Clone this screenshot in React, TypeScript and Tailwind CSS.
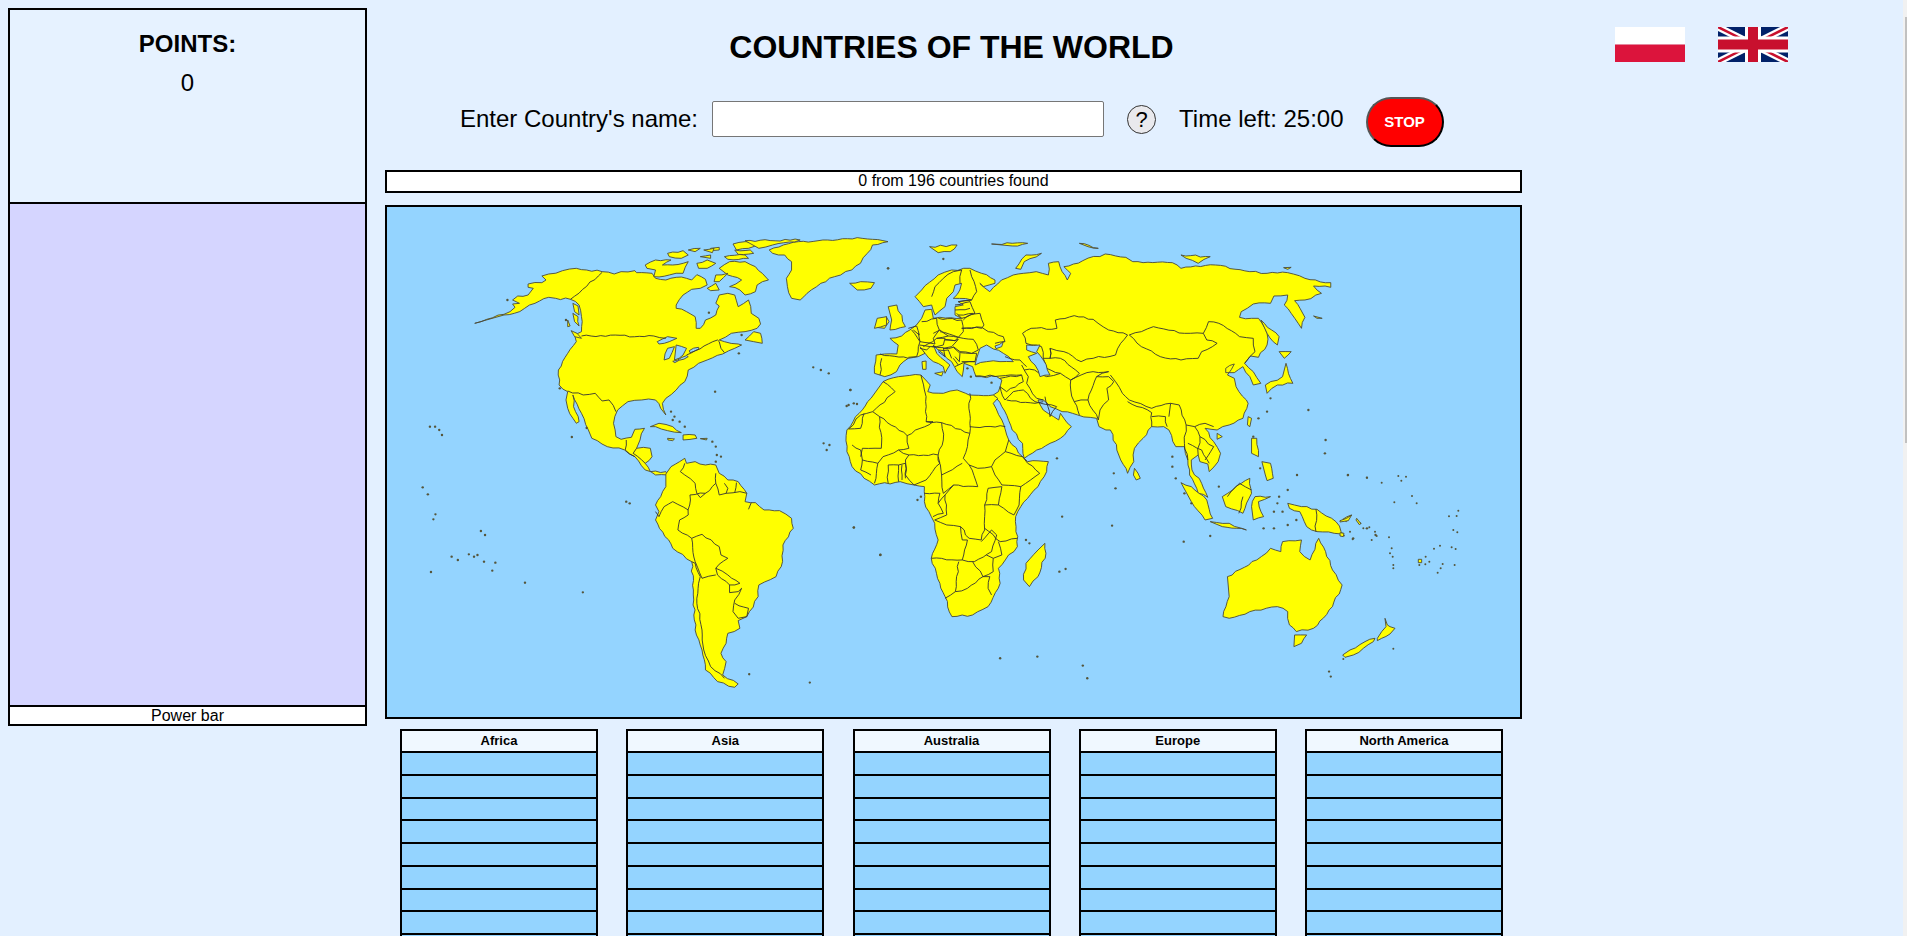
import React from 'react';

const FONT = "font-['Liberation_Sans',Arial,sans-serif]";
const CONTINENTS = ['Africa', 'Asia', 'Australia', 'Europe', 'North America'];
const ROWS = Array.from({ length: 12 }, (_, i) => i);

// reading coords: A = americas crop, B = old world crop, C = europe crop, D = pacific crop
const LAND_A = [
  '275,370 310,358 360,343 392,322 385,312 405,310 385,300 400,288 430,285 445,265 430,262 430,252 470,248 482,240 470,228 490,222 530,212 570,205 600,210 645,215 680,222 700,215 740,212 745,218 790,220 800,235 830,240 860,232 890,235 905,240 920,224 945,238 950,255 930,265 905,268 880,285 860,315 860,325 890,335 915,350 918,385 930,385 945,360 975,345 985,318 975,310 985,285 1010,280 1030,285 1040,320 1070,300 1078,340 1100,355 1105,372 1095,385 1060,395 1020,400 985,420 1000,425 1040,432 1050,435 1030,445 995,462 950,480 925,490 895,510 885,545 860,570 830,595 820,610 830,645 815,625 800,600 760,600 720,605 690,630 678,670 685,710 700,718 730,712 740,688 768,685 755,720 745,745 785,745 790,770 770,790 785,815 830,815 835,825 800,825 770,810 740,770 710,750 660,740 615,715 605,690 585,640 560,585 562,620 578,665 570,670 545,625 540,600 545,575 520,555 518,510 545,460 570,425 565,405 585,395 585,350 578,315 553,298 510,295 490,292 450,310 420,325 390,340 360,345',
  '830,822 845,800 870,785 885,775 890,790 915,785 945,795 975,795 985,820 1010,840 1040,845 1065,880 1060,905 1090,908 1115,930 1160,932 1195,955 1200,985 1170,1035 1165,1100 1150,1130 1100,1155 1098,1190 1065,1250 1040,1262 1045,1285 1010,1300 1005,1330 990,1360 1005,1385 995,1425 1040,1452 1030,1462 980,1445 945,1410 935,1350 915,1290 910,1170 905,1085 850,1045 800,960 810,935 800,915 815,890 830,860',
  '1130,150 1215,125 1300,120 1400,115 1475,125 1430,135 1415,160 1395,190 1370,210 1320,230 1280,250 1240,280 1220,300 1195,295 1183,260 1180,235 1195,210 1195,185 1175,165 1140,160',
  '770,195 800,180 845,180 820,195 850,195 895,185 880,220 840,225 795,230 800,210 775,205',
  '835,160 880,152 895,165 875,175 840,170',
  '895,150 930,145 915,155',
  '920,190 950,180 975,190 950,205 925,205',
  '960,145 985,142 985,150 960,152',
  '1025,132 1060,125 1100,130 1070,145 1035,150',
  '1060,122 1220,120 1140,135 1100,145',
  '985,205 1015,185 1060,185 1090,200 1110,220 1128,240 1095,255 1090,275 1060,285 1045,270 1015,260 1050,240 1010,225',
  '1000,170 1060,165 1070,175 1010,178',
  '1030,150 1075,150 1085,160 1040,163',
  '940,150 970,145 965,158',
  '930,170 960,165 960,175',
  '950,265 975,250 985,270 960,272',
  '975,225 1010,220 985,245 970,245',
  '1060,420 1085,395 1105,400 1110,430 1085,425',
  '785,680 810,670 850,680 875,698 835,692 800,680',
  '880,705 915,705 920,715 880,720',
  '835,715 855,717 850,722 836,720',
  '930,716 950,715 948,720',
  '1440,382 1470,350 1478,365 1465,385',
  '545,360 552,378 545,380',
  '560,310 575,318 578,345 565,335',
  '560,340 575,350 578,378 565,365',
  '555,392 572,400 585,415 565,410',
];

const BORDERS_A = [
  '645,217 553,298',
  '585,408 795,408 830,415',
  '890,465 980,420 985,425 990,445 1000,458',
  '545,573 590,585 625,580 645,603 665,600 685,635',
  '715,720 712,750 740,770',
  '745,745 735,760 770,790',
  '885,790 872,815 885,825 915,850 920,880 930,893 945,880 975,850 975,820',
  '975,850 985,885 1005,880 1010,865 1000,850',
  '1005,880 1045,875 1065,880',
  '1035,848 1030,878',
  '945,880 900,885 895,945 870,960 865,990 905,1015 935,1003 985,1040 990,1065 1010,1075 975,1105 980,1125 1015,1155 1045,1150 1010,1125 975,1105',
  '800,935 810,950 825,920 850,905 895,930',
  '905,1015 915,1085 935,1135 975,1125',
  '905,1085 915,1090 930,1130 925,1150 920,1210 935,1290 940,1350 960,1400 1000,1435',
  '1050,1165 1030,1200 1025,1235 1040,1255 1065,1250 1070,1225 1030,1210',
  '1015,1155 1015,1178 1040,1175 1050,1165',
  '1078,908 1070,928',
];

const LAND_B = [
  '100,430 105,375 130,372 165,372 169,345 145,325 179,318 203,300 222,285 237,265 247,240 266,238 271,265 290,262 353,265 334,255 334,230 358,225 343,215 382,210 329,205 348,180 353,160 334,165 329,185 310,205 305,230 276,255 266,225 242,230 218,200 237,180 285,135 324,120 377,115 411,130 450,150 450,160 416,170 406,160 435,185 469,150 503,135 532,130 570,125 605,135 605,100 635,95 645,125 660,150 670,130 650,110 705,92 770,72 830,82 850,95 880,98 965,98 990,115 1090,105 1190,125 1240,130 1300,128 1350,145 1425,158 1425,172 1375,168 1398,190 1350,210 1320,212 1350,262 1340,295 1310,250 1290,225 1300,195 1260,198 1250,220 1200,222 1165,245 1160,262 1195,265 1215,265 1240,310 1240,345 1215,382 1192,378 1175,400 1200,425 1222,460 1200,465 1190,440 1170,410 1145,428 1120,428 1120,415 1145,402 1125,435 1145,445 1150,470 1180,510 1185,520 1170,565 1130,585 1095,600 1060,595 1085,635 1105,670 1098,695 1072,725 1068,702 1045,695 1040,675 1020,690 1022,720 1050,760 1068,802 1040,790 1015,735 1010,690 1000,650 975,650 955,600 940,590 905,590 880,625 855,655 853,695 835,730 815,690 785,600 772,600 752,590 745,565 690,555 645,545 610,530 590,510 575,510 590,540 635,570 640,550 672,590 640,625 610,640 535,685 530,640 500,600 470,530 445,495 460,485 470,450 455,440 395,440 385,410 360,400 355,440 340,425 324,395 285,360 271,345 281,370 319,405 305,430 300,410 271,395 247,370 227,380 198,385 174,405 164,425 130,440',
  '125,455 170,440 235,435 262,465 255,485 300,490 340,480 365,490 375,495 445,495 458,505 445,520 470,570 490,630 530,680 545,695 605,695 600,725 575,770 525,830 510,860 515,950 480,990 460,1015 465,1060 430,1130 385,1155 325,1160 305,1100 290,1060 265,985 285,930 275,880 265,860 245,815 245,770 215,765 175,755 100,765 70,745 35,710 20,665 20,600 45,560 90,505',
  '595,940 598,970 575,1040 550,1070 533,1050 540,1000 575,960',
  '140,230 165,225 190,290 145,300 150,270',
  '108,265 135,260 135,285 100,295',
  '28,160 60,155 100,158 90,175 50,180',
  '260,50 340,45 320,65 285,68',
  '440,42 545,40 500,48',
  '510,115 540,75 585,70 535,95 525,118',
  '695,40 750,55 720,50',
  '990,75 1075,80 1040,100 1005,85',
  '1288,113 1310,112 1300,118',
  '1375,258 1400,265 1385,265',
  '1222,270 1275,320 1270,345 1240,310',
  '1275,365 1310,365 1290,385',
  '1295,400 1315,460 1270,465 1240,490 1235,465 1285,440',
  '855,715 872,745 860,750 852,735',
  '1095,610 1110,620 1095,628',
  '1185,560 1195,565 1190,590 1183,585',
  '1195,625 1210,625 1215,680 1195,670',
  '1225,695 1250,700 1258,745 1240,752 1235,735',
  '1110,800 1165,760 1190,745 1195,790 1170,850 1120,830',
  '990,758 1020,770 1065,810 1082,865 1060,870 1020,815',
  '1075,875 1130,880 1180,900 1110,890',
  '1195,830 1205,800 1250,800 1215,815 1230,860 1200,870',
  '1300,820 1340,830 1385,838 1440,875 1465,918 1435,910 1385,905 1355,890 1335,845 1305,835',
  '1125,1040 1210,990 1250,955 1280,965 1285,935 1340,930 1335,965 1365,990 1390,925 1410,965 1430,1020 1458,1065 1430,1130 1375,1195 1325,1205 1305,1185 1300,1145 1270,1130 1190,1145 1130,1165 1112,1160 1130,1100',
  '1320,1215 1355,1215 1340,1240 1318,1250',
  '1460,868 1485,855 1470,875',
  '238,395 250,393 250,418 240,418',
  '275,430 300,425 295,438',
];

const BORDERS_B = [
  '160,485 95,545 60,555 25,597 60,595 70,550',
  '125,455 160,485',
  '235,435 245,480 250,500 250,575 270,575 195,617 115,560 95,545',
  '115,560 120,655 65,655 60,680',
  '195,617 200,655 170,660 125,680 110,700 65,690',
  '250,575 295,578 377,610 377,490',
  '377,590 480,590',
  '295,578 300,630 285,675 200,675 170,660',
  '377,610 370,650 358,685 375,705 400,715 440,710 450,690 480,665 490,630',
  '295,735 355,700',
  '285,675 295,735 300,790 330,765 400,770 375,705',
  '190,690 200,675',
  '285,680 290,700 250,750 215,765 190,735 190,690',
  '480,665 530,680 545,700 580,730 525,770 470,765 450,735 440,710',
  '525,770 520,825 505,855 460,825 470,770 430,775 420,825 420,860 420,900 410,930 375,925 350,890 310,885 275,870 310,855 305,795 330,765',
  '420,825 460,825',
  '420,895 465,935 515,925',
  '350,890 355,930 370,930 355,990 265,985',
  '410,935 440,900 455,915 440,965 390,995 355,990',
  '345,995 335,1085 305,1105',
  '385,995 415,1040 370,1075 335,1085',
  '425,975 445,985 445,1025 415,1040 435,1040 430,1075 440,1095',
  '460,935 470,975 445,985',
  '35,645 60,660 65,690 60,720 90,735',
  '140,705 170,705 170,755',
  '140,705 140,760',
  '170,705 190,700 190,745',
  '180,705 180,750',
  '245,790 290,790 285,820 305,795',
  '285,820 300,850 270,860',
  '110,700 100,760',
  '530,310 555,295 630,295 625,270 680,257 735,268 780,300 835,315 815,340 800,375 735,385 700,395 650,365 610,355 610,385 590,385 585,350 540,340 530,310',
  '610,355 610,385 640,385 695,430 670,450 640,430 600,415 590,385',
  '670,450 700,435 735,425 780,425 745,440 730,480 720,510 680,515 670,480 670,450',
  '535,420 565,420 600,440 640,430',
  '680,515 695,555',
  '720,510 750,570',
  '745,440 780,440 795,455 775,475 780,510 755,540 750,570',
  '785,435 800,455 820,490 840,510 905,535 960,520 985,525 1005,585 1030,590 1060,580 1085,590',
  '835,515 905,548 905,590',
  '905,560 945,560 950,590',
  '840,315 875,305 910,290 1000,310 1055,310 1065,330 1095,340 1050,365 1040,385 990,390 930,380 875,350 840,315',
  '1055,310 1070,275 1100,280 1160,320 1200,325 1205,365 1190,380 1175,400',
  '960,520 955,560',
  '1005,585 1000,640 1010,690',
  '1030,590 1045,620 1040,675',
  '1045,620 1085,650 1060,690',
  '1010,640 1050,660 1072,700',
  '1382,838 1382,905',
  '1195,780 1160,760 1125,800',
  '1158,850 1170,800',
];

const LAND_D = [
  '8,615 30,600 75,575 105,565 100,575 70,595 40,615 15,622',
  '112,565 125,545 138,530 135,505 142,525 150,530 165,535 150,552 125,565 112,572',
  '0,212 20,205 35,195 25,212 0,216',
  '50,205 62,220 58,224 48,210',
  '235,328 245,328 245,338 235,338',
  '0,248 12,250 10,260 0,258',
];

const BORDERS_C = [
  '155,140 165,110 190,85 220,65 245,60 240,100',
  '270,60 275,80 290,125 275,150 235,155',
  '225,165 270,155 285,190 245,205 230,190',
  '225,180 270,175',
  '235,195 280,190',
  '250,210 275,193 300,190 312,225 305,235 245,235',
  '245,235 305,232 325,245 370,260 375,275 345,280',
  '175,205 245,210 250,245 235,262 180,245',
  '125,215 170,205 178,240 160,265 165,282 120,275 115,250',
  '95,240 120,275 115,290 110,320 85,322',
  '0,312 85,325',
  '160,250 180,240 205,258 170,265',
  '205,258 235,262 225,272 195,268',
  '130,290 170,265 195,265 190,285 150,290',
  '195,270 225,272 235,268 215,290 190,295',
  '235,262 280,268 295,300 275,310 240,305 220,290',
  '240,308 290,310 285,335 245,335',
  '190,295 220,292 240,310 238,335 225,320',
  '155,290 190,293 195,320 175,305',
  '175,300 205,300 215,325',
  '225,350 250,338 285,335',
  '220,325 235,345',
  '120,290 135,310',
  '118,285 150,290 140,300 120,295',
  '85,235 110,228 118,255 100,240',
  '285,378 360,378 425,375',
  '375,320 420,330 440,350',
  '425,345 445,380 440,400 470,445 490,450',
  '360,385 425,375 430,395 380,425 360,410 375,450 400,425 430,420 465,455',
  '5,325 0,375',
  '380,450 465,460 490,455',
  '465,455 530,470 510,500 495,440',
];

const SEAS_A = [
  '805,425 835,410 862,415 840,425 810,432',
  '825,480 835,445 855,440 840,475',
  '860,435 890,445 880,465 855,480',
  '850,484 890,467 895,470 856,488',
  '898,452 925,442 926,447 900,458',
];

const SEAS_C = [
  '295,310 300,295 320,285 340,297 370,310 400,335 360,335 320,335 285,345 290,325',
  '345,288 370,275 365,290 348,296',
  '440,285 480,285 470,305 490,330 510,375 480,380 465,345 445,320 470,310 440,300',
];

const DOTS_A = [
  [145, 680], [160, 680], [172, 690], [180, 705], [124, 862], [139, 883], [161, 943], [155, 958], [293, 993], [305, 1005],
  [208, 1070], [226, 1080], [258, 1063], [273, 1070], [283, 1065], [302, 1085], [335, 1088], [326, 1112], [148, 1116],
  [421, 1148], [589, 1177], [557, 711], [600, 684], [973, 575], [1258, 502], [1280, 510], [1303, 520], [1366, 570],
  [1355, 618], [1385, 612], [1288, 730], [1305, 735], [1297, 750], [1376, 982], [1453, 1064], [1475, 205], [715, 905],
  [725, 910], [1072, 1423], [1248, 1448], [965, 725], [975, 740], [978, 765], [975, 785], [990, 770], [845, 635],
  [855, 650], [870, 665], [885, 680], [850, 660], [522, 565], [370, 300], [540, 360], [1050, 405], [955, 338], [1042, 460],
];

const DOTS_B = [
  [140, 115], [300, 87], [30, 480], [25, 525], [40, 520], [225, 810], [235, 800], [40, 893], [117, 975], [630, 685], [795, 730],
  [800, 775], [645, 860], [790, 887], [998, 935], [1075, 918], [1360, 540], [1410, 630], [1408, 670], [1475, 735], [1530, 743],
  [1327, 735], [1300, 780], [465, 1285], [573, 1280], [705, 1307], [718, 1345], [1420, 1325], [1425, 1340], [1490, 925], [1510, 880],
  [1530, 895], [1555, 915], [540, 930], [550, 940], [637, 1025], [655, 1017], [965, 680], [965, 710], [975, 745], [1000, 790],
  [1020, 820], [1250, 505], [1240, 545], [1215, 565], [1275, 800], [1270, 820], [1260, 845], [1285, 845], [1325, 870], [1300, 885],
  [1230, 895], [1260, 895], [1200, 620], [1220, 715], [1100, 770], [370, 415], [380, 440], [440, 458],
];

const DOTS_D = [
  [23, 76], [81, 83], [125, 98], [175, 78], [198, 80], [184, 92], [216, 138], [230, 160], [163, 157], [355, 182], [327, 199],
  [350, 198], [340, 240], [352, 247], [282, 296], [300, 287], [335, 292], [347, 297], [308, 342], [344, 345], [293, 368],
  [302, 355], [70, 235], [88, 232], [105, 245], [110, 258], [147, 262], [155, 295], [150, 310], [158, 320], [160, 345], [160, 355],
  [257, 320], [268, 335], [256, 343], [238, 345], [30, 245], [38, 268], [95, 270], [160, 596], [10, 627],
];

// breaks long straight edges up a little so coasts and borders don't look ruled
function roughen(points: string) {
  const pts = points.split(' ').map((p) => p.split(',').map(Number));
  const out: string[] = [];
  pts.forEach(([x, y], i) => {
    out.push(`${x},${y}`);
    const next = pts[i + 1];
    if (!next) return;
    const dx = next[0] - x;
    const dy = next[1] - y;
    const len = Math.hypot(dx, dy);
    const steps = Math.floor(len / 14);
    for (let s = 1; s < steps; s++) {
      const t = s / steps;
      const n = Math.sin((x + s) * 12.9898 + (y + s) * 78.233) * 43758.5453;
      const off = ((n - Math.floor(n)) - 0.5) * 6;
      out.push(`${(x + dx * t - (dy / len) * off).toFixed(1)},${(y + dy * t + (dx / len) * off).toFixed(1)}`);
    }
  });
  return out.join(' ');
}

function Land({ points }: { points: string[] }) {
  return (
    <>
      {points.map((p, i) => (
        <polygon key={i} points={roughen(p)} fill="#ffff00" stroke="#4a4a3a" strokeWidth="0.9" strokeLinejoin="round" vectorEffect="non-scaling-stroke" />
      ))}
    </>
  );
}

function Lines({ points }: { points: string[] }) {
  return (
    <>
      {points.map((p, i) => (
        <polyline key={i} points={roughen(p)} fill="none" stroke="#333333" strokeWidth="0.9" strokeLinejoin="round" vectorEffect="non-scaling-stroke" />
      ))}
    </>
  );
}

function Seas({ points }: { points: string[] }) {
  return (
    <>
      {points.map((p, i) => (
        <polygon key={i} points={roughen(p)} fill="#94d4ff" stroke="#4a4a3a" strokeWidth="0.9" strokeLinejoin="round" vectorEffect="non-scaling-stroke" />
      ))}
    </>
  );
}

function Dots({ points, r }: { points: number[][]; r: number }) {
  return (
    <>
      {points.map(([x, y], i) => (
        <circle key={i} cx={x} cy={y} r={r} fill="#55553a" />
      ))}
    </>
  );
}

function WorldMap() {
  return (
    <svg viewBox="387 207 1133 510" className="block h-full w-full">
      <g transform="translate(380 200) scale(0.3444 0.3333)">
        <Land points={LAND_A} />
        <Seas points={SEAS_A} />
        <Lines points={BORDERS_A} />
        <Dots points={DOTS_A} r={3.5} />
      </g>
      <g transform="translate(840 230) scale(0.3444 0.3333)">
        <Land points={LAND_B} />
        <Lines points={BORDERS_B} />
        <Dots points={DOTS_B} r={3.5} />
      </g>
      <g transform="translate(880 250) scale(0.3333)">
        <Seas points={SEAS_C} />
        <Lines points={BORDERS_C} />
      </g>
      <g transform="translate(1340 450) scale(0.3333)">
        <Land points={LAND_D} />
        <Dots points={DOTS_D} r={3} />
      </g>
    </svg>
  );
}

function PolandFlag() {
  return (
    <svg viewBox="0 0 70 35" className="block h-[35px] w-[70px]">
      <rect width="70" height="17.5" fill="#ffffff" />
      <rect y="17.5" width="70" height="17.5" fill="#dc143c" />
    </svg>
  );
}

function UkFlag() {
  return (
    <svg viewBox="0 0 70 35" className="block h-[35px] w-[70px]">
      <rect width="70" height="35" fill="#012169" />
      <path d="M0,0 L70,35 M70,0 L0,35" stroke="#ffffff" strokeWidth="7" />
      <path d="M0,0 L35,17.5 M70,35 L35,17.5 M70,0 L35,17.5 M0,35 L35,17.5" stroke="#c8102e" strokeWidth="2.5" />
      <path d="M35,0 V35 M0,17.5 H70" stroke="#ffffff" strokeWidth="16" />
      <path d="M35,0 V35 M0,17.5 H70" stroke="#c8102e" strokeWidth="10" />
    </svg>
  );
}

export default function App() {
  return (
    <div className={`${FONT} relative flex h-screen items-start overflow-hidden bg-[#e3f0ff] text-black`}>
      <aside className="ml-2 mt-2 w-[359px] shrink-0 border-2 border-black">
        <div className="h-[194px] border-b-2 border-black bg-[#e6f2ff] pt-[18px] text-center">
          <div className="text-[24px] font-bold leading-[32px]">POINTS:</div>
          <div className="mt-[7px] text-[24px] leading-[32px]">0</div>
        </div>
        <div className="h-[501px] bg-[#d5d5ff]" />
        <div className="h-[19px] border-t-2 border-black bg-white text-center text-[16px] leading-[17px]">Power bar</div>
      </aside>

      <main className="ml-[18px] w-[1137px] shrink-0">
        <h1 className="flex h-[93px] items-center justify-center pr-1 text-[32px] font-bold">COUNTRIES OF THE WORLD</h1>
        <div className="mt-1 flex h-[50px] items-center pl-[75px] text-[24px]">
          <label className="mb-[6px]">Enter Country's name:</label>
          <input className="mb-[6px] ml-[14px] h-9 w-[392px] rounded-[2px] border border-[#767676] bg-white" />
          <button className="mb-[6px] ml-[23px] flex h-[29px] w-[29px] items-center justify-center rounded-full border border-[#333333] bg-[#e9e9ed] text-[22px]">?</button>
          <span className="mb-[6px] ml-[23px]">Time left: 25:00</span>
          <button className="ml-[22px] h-[50px] w-[78px] rounded-[25px] border-2 border-t-[#555555] border-r-black border-b-black border-l-[#555555] bg-[#ff0000] text-[15px] font-bold text-white">STOP</button>
        </div>
        <div className="mt-[23px] h-[23px] border-2 border-black bg-white text-center text-[16px] leading-[18px]">0 from 196 countries found</div>
        <div className="mt-3 h-[514px] border-2 border-black bg-[#94d4ff]">
          <WorldMap />
        </div>
        <div className="mt-[10px] flex gap-[28.25px] pl-[15px]">
          {CONTINENTS.map((name) => (
            <div key={name} className="w-[198px] shrink-0 border-2 border-black">
              <div className="h-[22px] border-b-2 border-black bg-[#f0f8ff] text-center text-[13px] font-bold leading-[20px]">{name}</div>
              {ROWS.map((row) => (
                <div key={row} className="h-[22.75px] border-b-2 border-black bg-[#94d4ff]" />
              ))}
            </div>
          ))}
        </div>
      </main>

      <div className="ml-[93px] mt-[27px] flex gap-[33px]">
        <PolandFlag />
        <UkFlag />
      </div>

      <div className="absolute right-0 top-0 h-full w-1 bg-[#f1f1f1]">
        <div className="absolute right-0 top-[17px] h-[426px] w-[2px] bg-[#c1c1c1]" />
      </div>
    </div>
  );
}
